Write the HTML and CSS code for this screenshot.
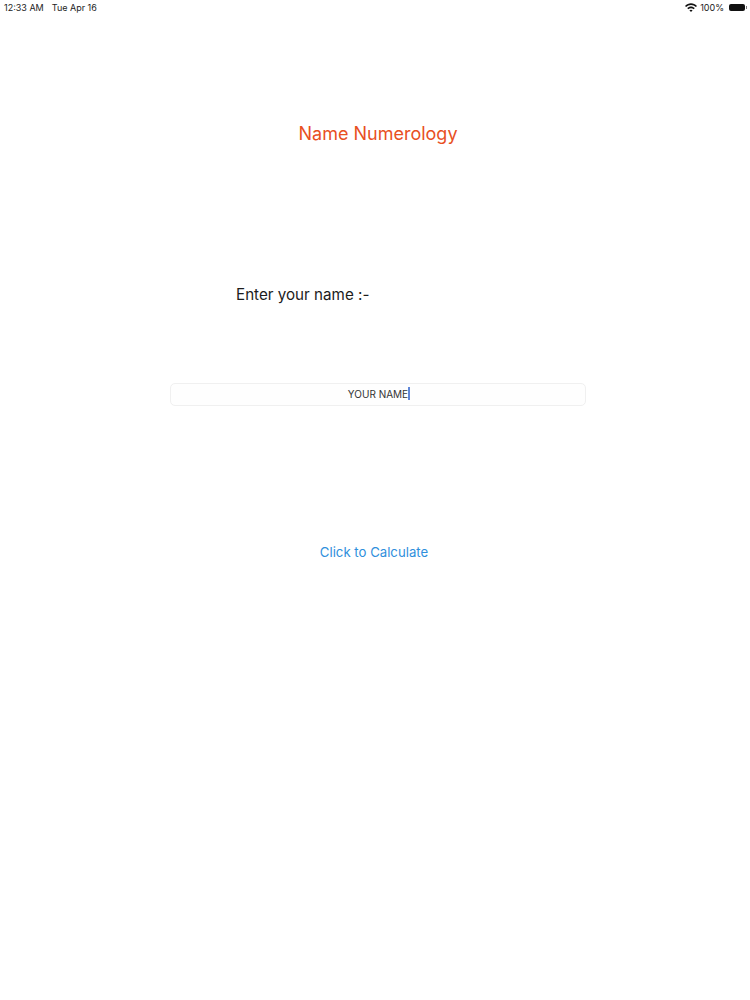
FILE: index.html
```html
<!DOCTYPE html>
<html>
    <head>
        <meta charset="UTF-8">
        <meta name="viewport" content="width=device-width, initial-scale=1.0">
        <title>Name Numerology</title>
        <link rel="stylesheet" href="styles.css">
    </head>
    <body>
        <div class="status-bar">
            <div class="status-left">
                <span>12:33 AM</span>
                <span>Tue Apr 16</span>
            </div>
            <div class="status-right">
                <svg class="wifi" viewBox="0 0 12 9" width="12" height="9">
                    <path d="M0 2.9C3.4-.6 8.6-.6 12 2.9l-1.1 1.2C8.1 1.3 3.9 1.3 1.1 4.1z" fill="#111"/>
                    <path d="M2.2 5.1c2.2-2.1 5.4-2.1 7.6 0L8.7 6.3c-1.5-1.4-3.9-1.4-5.4 0z" fill="#111"/>
                    <path d="M4.4 7.3c.9-.8 2.3-.8 3.2 0L6 9z" fill="#111"/>
                </svg>
                <span>100%</span>
                <div class="battery"></div>
                <div class="battery-tip"></div>
            </div>
        </div>

        <div class="container">
            <h1 class="title">Name Numerology</h1>
            <p class="label">Enter your name :-</p>
            <div class="name-input">
                <span class="name-text">YOUR NAME</span><span class="cursor"></span>
            </div>
            <a class="calculate" href="#">Click to Calculate</a>
        </div>
    </body>
</html>
```

FILE: styles.css
```css
*{
    margin: 0;
    padding: 0;
    box-sizing: border-box;
    font-family: Inter, "Liberation Sans", sans-serif;
}
body{
    background-color: white;
    height: 1000px;
    overflow: hidden;
}
.status-bar {
    display: flex;
    justify-content: space-between;
    align-items: center;
    height: 14px;
    padding: 0 3px 0 4px;
    font-size: 9px;
    color: #222;
}
.status-left {
    display: flex;
    gap: 8px;
}
.status-right {
    display: flex;
    align-items: center;
    gap: 3px;
}
.battery {
    width: 16px;
    height: 7px;
    border-radius: 2px;
    background-color: #111;
    margin-left: 2px;
}
.battery-tip {
    width: 1px;
    height: 3px;
    margin-left: -2px;
    background-color: #777;
}
.container {
    display: flex;
    flex-direction: column;
    align-items: flex-start;
}
.title {
    width: 100%;
    margin-top: 108px;
    padding-left: 6px;
    text-align: center;
    font-size: 18px;
    line-height: 24px;
    font-weight: 400;
    color: #e8501f;
}
.label {
    margin-top: 137px;
    margin-left: 236px;
    font-size: 15.2px;
    line-height: 24px;
    color: #1c1c1c;
}
.name-input {
    display: flex;
    justify-content: center;
    align-items: center;
    width: 416px;
    height: 23px;
    margin-top: 76px;
    margin-left: 170px;
    padding-bottom: 2px;
    padding-left: 2px;
    border: 1px solid #f0f0f0;
    border-radius: 5px;
    background-color: #fefefe;
}
.name-text {
    font-size: 10px;
    color: #333;
}
.cursor {
    width: 2px;
    height: 13px;
    background-color: #5f86d8;
}
.calculate {
    align-self: center;
    margin-top: 136px;
    margin-right: 2px;
    font-size: 13.2px;
    line-height: 20px;
    color: #2f8fdc;
    text-decoration: none;
}
```
